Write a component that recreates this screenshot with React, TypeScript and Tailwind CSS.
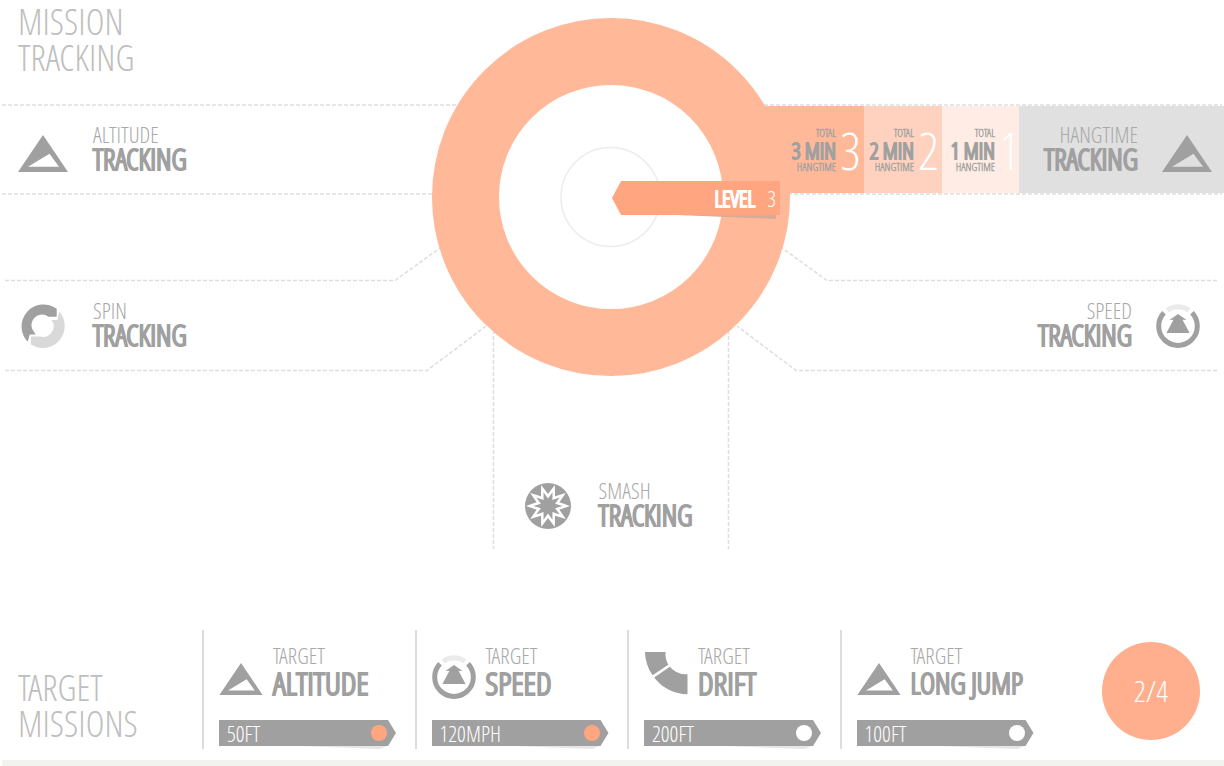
import type { ReactNode } from "react";

type IconProps = { className?: string };

function PeakIcon({ className }: IconProps) {
  return (
    <svg viewBox="0 0 50 37" className={className} fill="#a0a0a0" fillRule="evenodd" aria-hidden="true">
      <path d="M25 0 50 37H0ZM10 31.8 31.5 18.8 41 31.8Z" />
    </svg>
  );
}

function SpinIcon({ className }: IconProps) {
  return (
    <svg viewBox="0 0 44 44" className={className} aria-hidden="true">
      <path fill="#a0a0a0" d="M35.7 4.8V12.8H27.5A10.500 10.500 0 0 0 12 26.5L14.8 30.6H8.800L6.7 37.7A22 22 0 0 1 35.7 4.8Z" />
      <path fill="#d9d9d9" d="M38.3 7.6A22 22 0 0 1 9.9 40.6V32.6H19A10.800 10.800 0 0 0 32 18.5L30.500 16H36.500Z" />
    </svg>
  );
}

function SpeedIcon({ className }: IconProps) {
  return (
    <svg viewBox="0 0 44 44" className={className} aria-hidden="true">
      <path fill="none" stroke="#a0a0a0" strokeWidth="5" d="M8 8.8A19.3 19.3 0 1 0 36 8.800" />
      <path fill="none" stroke="#ebebeb" strokeWidth="5" d="M11 6.2A19.3 19.3 0 0 1 33 6.2" />
      <path fill="#a0a0a0" d="M22 10 30.500 16 26.500 15.800 33.600 29H10.400L17.500 15.800 13.500 16Z" />
    </svg>
  );
}

function star(outer: number, inner: number, points: number) {
  return Array.from({ length: points * 2 }, (_, i) => {
    const r = i % 2 ? outer : inner;
    const a = (Math.PI * i) / points - Math.PI / 2;
    return `${(23 + r * Math.cos(a)).toFixed(2)},${(23 + r * Math.sin(a)).toFixed(2)}`;
  }).join(" ");
}

function SmashIcon({ className }: IconProps) {
  return (
    <svg viewBox="0 0 46 46" className={className} aria-hidden="true">
      <circle cx="23" cy="23" r="23" fill="#a0a0a0" />
      <polygon points={star(22, 12, 10)} fill="#fff" />
      <polygon points={star(14.5, 7.5, 10)} fill="#a0a0a0" />
    </svg>
  );
}

function DriftIcon({ className }: IconProps) {
  return (
    <svg viewBox="0 0 43 43" className={className} fill="#a0a0a0" aria-hidden="true">
      <path d="M0 0H20.500A22 22 0 0 0 23.300 12.700L7.600 23.300A42 42 0 0 1 0 0Z" />
      <path d="M24.800 14.700A22 22 0 0 0 42.500 22.300V42.300A42 42 0 0 1 9.200 25.500Z" />
    </svg>
  );
}

function Label({ top, bottom, right }: { top: string; bottom: string; right?: boolean }) {
  return (
    <h2 className={`pb-1.5 ${right ? "text-right" : "text-left"}`}>
      <span className="block text-[22px] leading-6 text-[#a8a8a8]">{top}</span>
      <span className="block text-[29px] leading-[26px] font-bold text-[#a0a0a0] [-webkit-text-stroke:1px_#a0a0a0]">{bottom}</span>
    </h2>
  );
}

function Step({ n, className }: { n: number; className: string }) {
  return (
    <li className={`flex items-center justify-end gap-1 ${className}`}>
      <div className="text-right font-bold text-[#a0a0a0]">
        <div className="text-[11px] leading-3">TOTAL</div>
        <div className="text-[22px] leading-[22px] [-webkit-text-stroke:1px_#a0a0a0]">{n} MIN</div>
        <div className="text-[11px] leading-3">HANGTIME</div>
      </div>
      <div className="w-5 text-center text-[52px] leading-[52px] text-white">{n}</div>
    </li>
  );
}

type TargetProps = { name: string; value: string; icon: ReactNode; done?: boolean; compact?: boolean };

function Target({ name, value, icon, done, compact }: TargetProps) {
  return (
    <li className="flex flex-col border-l-2 border-[#dcdddd] pl-[15px]">
      <div className="flex h-[69px] items-end gap-2.5 pt-3">
        <div className="flex w-11 shrink-0 justify-center">{icon}</div>
        <h3 className="whitespace-nowrap">
          <span className="block text-[22px] leading-6 text-[#a8a8a8]">TARGET</span>
          <span
            className={`block leading-8 font-bold text-[#a0a0a0] [-webkit-text-stroke:1px_#a0a0a0] ${compact ? "text-[29px]" : "text-[32px]"}`}
          >
            {name}
          </span>
        </h3>
      </div>
      <div className="relative mt-[21px] w-[177px]">
        <div className="absolute inset-x-0 top-[25px] h-1 bg-[#e6e6e6] [clip-path:polygon(30%_0,96%_0,91%_100%)]" />
        <div className="relative flex h-[26px] items-center justify-between bg-[#a0a0a0] pr-[9px] pl-2 [clip-path:polygon(0_0,calc(100%-8px)_0,100%_50%,calc(100%-8px)_100%,0_100%)]">
          <span className="text-[22px] leading-6 text-white">{value}</span>
          <span className={`size-4 rounded-full ${done ? "bg-[#ffa681]" : "bg-white"}`} />
        </div>
      </div>
    </li>
  );
}

export default function App() {
  return (
    <main className="flex min-h-screen flex-col overflow-hidden bg-white font-['Open_Sans_Condensed_Light','Open_Sans_Condensed','Roboto_Condensed',sans-serif]">
      <header className="h-[105px] pt-1 pl-[18px]">
        <h1 className="text-4xl leading-9 text-[#bebebe]">
          MISSION
          <br />
          TRACKING
        </h1>
      </header>

      <section className="relative">
        <svg
          viewBox="0 105 1224 450"
          className="absolute top-0 left-1/2 h-[450px] w-[1224px] -translate-x-1/2 overflow-visible"
          fill="none"
          stroke="#dedede"
          strokeWidth="1.5"
          strokeDasharray="4 2"
          aria-hidden="true"
        >
          <path d="M2 105H1222M2 194H1222M5 280.500H395L440 248M5 370.500H427L486 326M1217 280.500H827L782 248M1217 370.500H796L737 326M493.500 330V549M728.500 330V549" />
        </svg>

        <div className="relative flex h-[89px] items-stretch pt-px pb-px">
          <div className="flex flex-1 items-center gap-[25px] pl-[18px]">
            <PeakIcon className="mt-2 h-[37px] w-[50px]" />
            <Label top="ALTITUDE" bottom="TRACKING" />
          </div>
          <div className="flex flex-1">
            <ol className="flex flex-1">
              <Step n={3} className="flex-1 bg-[#ffb999] pr-1" />
              <Step n={2} className="w-[78px] bg-[#ffd2bf] pr-1" />
              <Step n={1} className="w-[77px] bg-[#ffece4]" />
            </ol>
            <div className="flex w-[205px] items-center justify-end gap-6 bg-[#e0e0e0] pr-3">
              <Label top="HANGTIME" bottom="TRACKING" right />
              <PeakIcon className="mt-2 h-[37px] w-[50px]" />
            </div>
          </div>
        </div>

        <div className="relative mt-[87px] flex h-[90px] items-center justify-between pr-6 pl-[21px]">
          <div className="flex items-center gap-7">
            <SpinIcon className="size-11" />
            <Label top="SPIN" bottom="TRACKING" />
          </div>
          <div className="flex items-center gap-6">
            <Label top="SPEED" bottom="TRACKING" right />
            <SpeedIcon className="size-11" />
          </div>
        </div>

        <div className="relative mt-[90px] flex h-[90px] items-center justify-center gap-7 pr-[7px]">
          <SmashIcon className="size-[46px]" />
          <Label top="SMASH" bottom="TRACKING" />
        </div>

        <svg viewBox="0 0 358 358" className="absolute -top-[87px] left-1/2 size-[358px] -translate-x-[180px]" aria-hidden="true">
          <circle cx="179" cy="179" r="145.500" fill="#fff" stroke="#ffb999" strokeWidth="67" />
          <circle cx="178.500" cy="179" r="49.500" fill="none" stroke="#ececec" strokeWidth="1.500" />
        </svg>
        <div className="absolute top-[76px] left-1/2 w-[168px]">
          <div className="absolute top-[33px] right-1 left-10 h-[5px] bg-[#d9ab97] [clip-path:polygon(0_0,100%_0,100%_100%)]" />
          <p className="relative flex h-[34px] items-center justify-end gap-3 bg-[#ffa681] pr-1 text-[22px] leading-6 text-white [clip-path:polygon(9px_0,100%_0,100%_100%,9px_100%,0_50%)]">
            <strong className="[-webkit-text-stroke:1px_#fff]">LEVEL</strong>
            <span>3</span>
          </p>
        </div>
      </section>

      <section className="mt-auto grid grid-cols-[202px_minmax(0,1fr)_172px] pb-[11px]">
        <h2 className="pt-10 pl-[18px] text-4xl leading-9 text-[#bebebe]">
          TARGET
          <br />
          MISSIONS
        </h2>
        <ul className="grid h-[119px] grid-cols-4">
          <Target name="ALTITUDE" value="50FT" done icon={<PeakIcon className="mb-1 h-8 w-11" />} />
          <Target name="SPEED" value="120MPH" done icon={<SpeedIcon className="size-11" />} />
          <Target name="DRIFT" value="200FT" icon={<DriftIcon className="mb-1 size-[43px]" />} />
          <Target name="LONG JUMP" value="100FT" compact icon={<PeakIcon className="mb-1 h-8 w-11" />} />
        </ul>
        <div className="flex items-center justify-end pt-0.5 pr-6">
          <p className="flex size-[98px] items-center justify-center rounded-full bg-[#ffaf8d] text-3xl text-white">2/4</p>
        </div>
      </section>
      <footer className="ml-0.5 h-1.5 bg-[#f2f3ee]" />
    </main>
  );
}
